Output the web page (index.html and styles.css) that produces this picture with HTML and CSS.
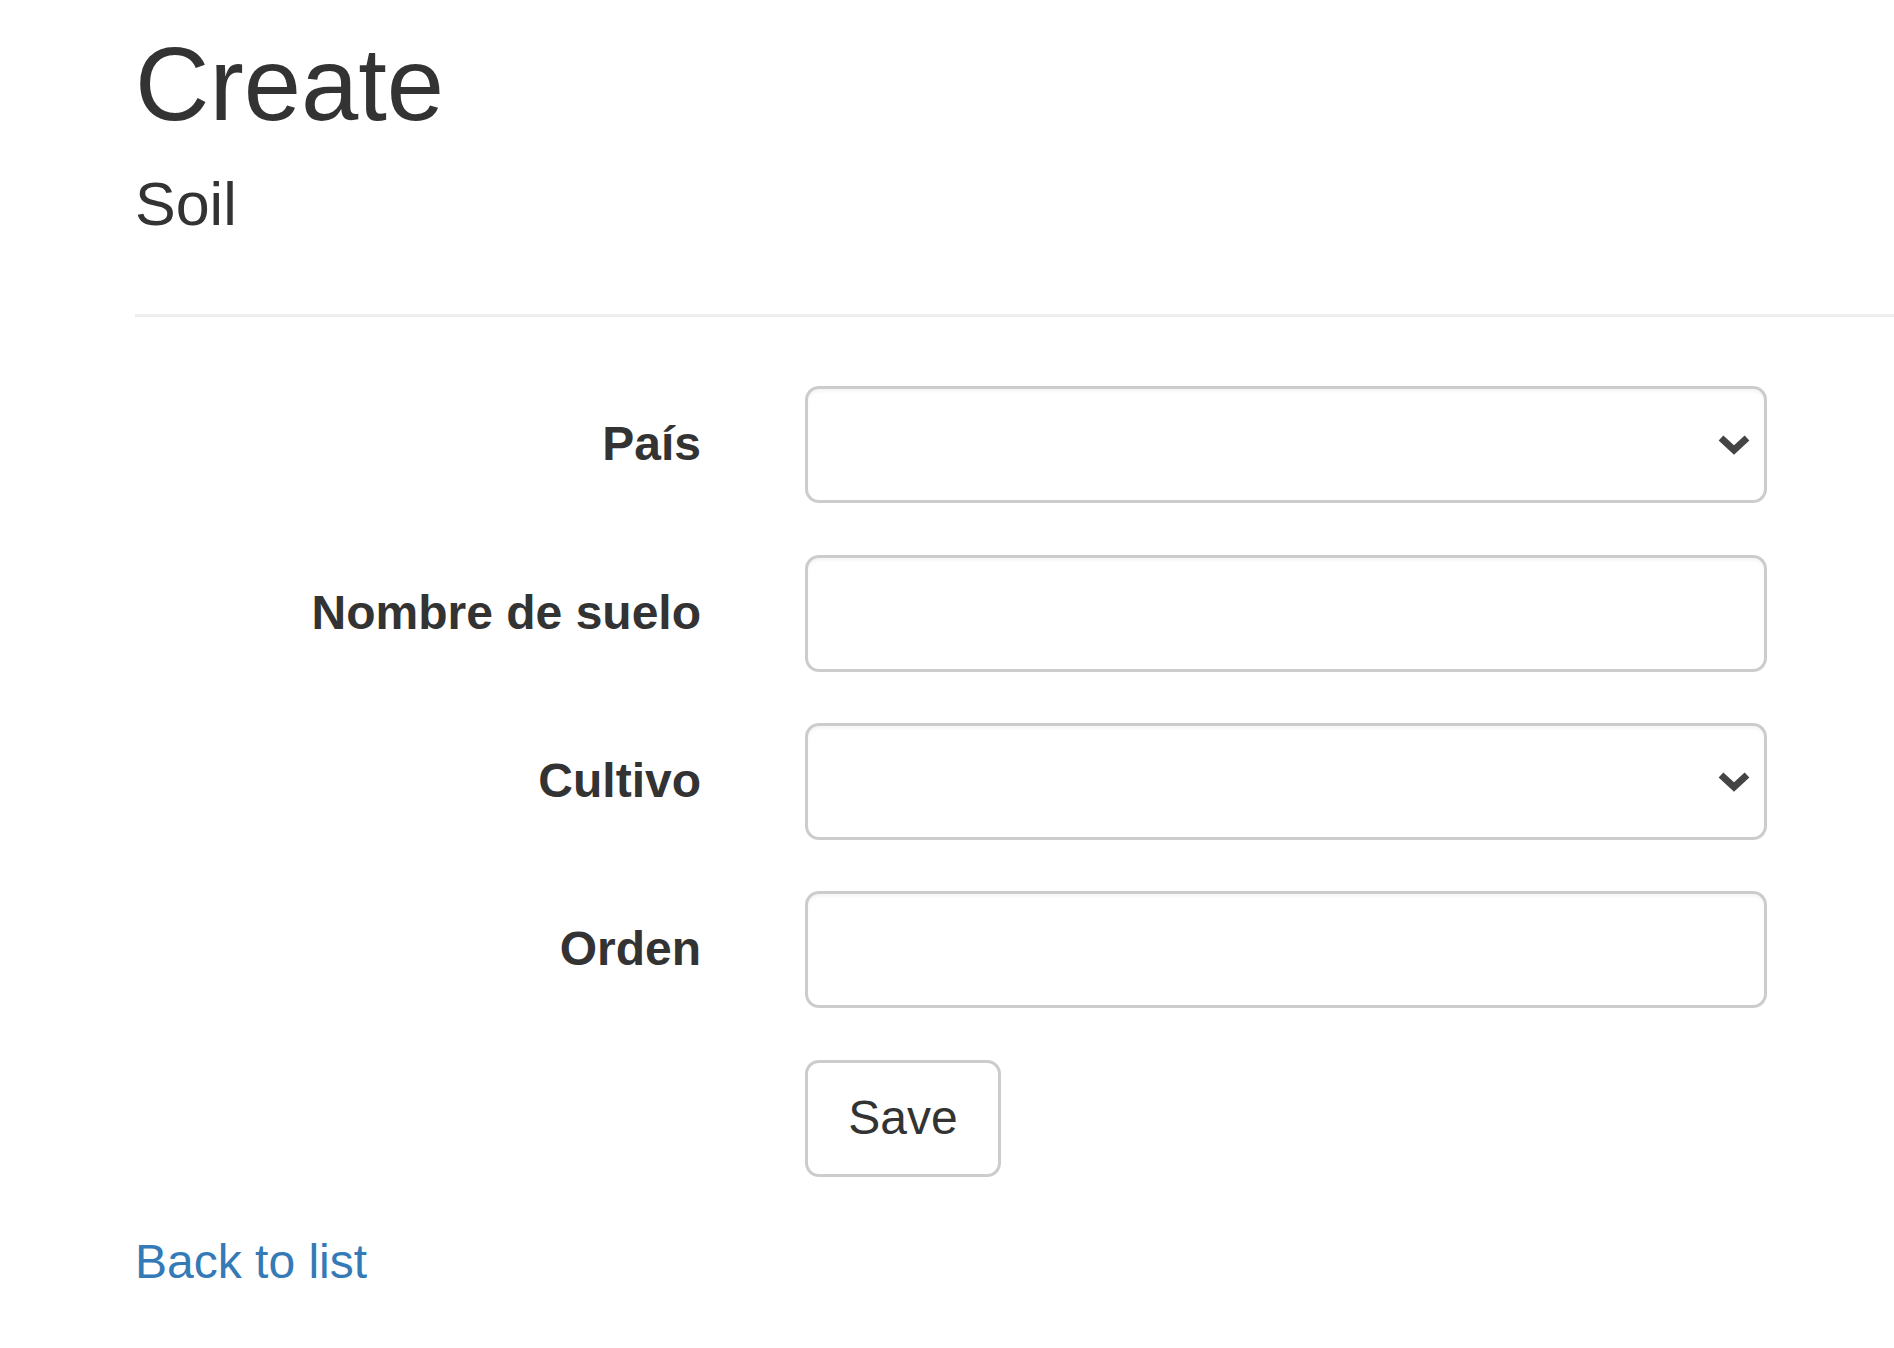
FILE: index.html
```html
<!DOCTYPE html>
<html lang="es">
<head>
<meta charset="utf-8">
<title>Create - Soil</title>
<link rel="stylesheet" href="styles.css">
</head>
<body>
<div class="container">
  <h2 class="page-title">Create</h2>
  <form class="form-horizontal">
    <h4 class="subtitle">Soil</h4>
    <hr class="divider">
    <div class="form-group">
      <label class="control-label">País</label>
      <div class="field">
        <div class="select-wrap">
          <div class="form-control"></div>
          <svg class="chevron" width="34" height="22" viewBox="0 0 34 22"><polyline points="4,5 17,17 30,5" fill="none" stroke="#444" stroke-width="7" stroke-linejoin="miter"/></svg>
        </div>
      </div>
    </div>
    <div class="form-group">
      <label class="control-label">Nombre de suelo</label>
      <div class="field">
        <div class="form-control"></div>
      </div>
    </div>
    <div class="form-group">
      <label class="control-label">Cultivo</label>
      <div class="field">
        <div class="select-wrap">
          <div class="form-control"></div>
          <svg class="chevron" width="34" height="22" viewBox="0 0 34 22"><polyline points="4,5 17,17 30,5" fill="none" stroke="#444" stroke-width="7" stroke-linejoin="miter"/></svg>
        </div>
      </div>
    </div>
    <div class="form-group">
      <label class="control-label">Orden</label>
      <div class="field">
        <div class="form-control"></div>
      </div>
    </div>
    <div class="form-group">
      <span class="control-label"></span>
      <div class="field">
        <button type="button" class="btn">Save</button>
      </div>
    </div>
  </form>
  <div class="back">
    <a href="#" class="back-link">Back to list</a>
  </div>
</div>
</body>
</html>
```

FILE: styles.css
```css
html, body {
  margin: 0;
  padding: 0;
  background: #fff;
}
body {
  font-family: "Liberation Sans", Arial, Helvetica, sans-serif;
  font-size: 48px;
  line-height: 68.6px;
  color: #333;
  overflow: hidden;
}
.container {
  padding-left: 135px;
}
.page-title {
  margin: 28px 0 0;
  font-size: 103px;
  font-weight: 400;
  line-height: 113.3px;
}
.form-horizontal {
  margin: 0;
}
.subtitle {
  margin: 30px 0 0;
  font-size: 61px;
  font-weight: 400;
  line-height: 67.9px;
}
.divider {
  margin: 74.5px 0 69.6px;
  border: 0;
  border-top: 3.4px solid #eeeeee;
  height: 0;
}
.form-group {
  display: grid;
  grid-template-columns: 566px 962px;
  column-gap: 104px;
  margin-bottom: 51.4px;
}
.control-label {
  text-align: right;
  font-weight: 700;
  padding-top: 24px;
}
.field {
  display: flex;
}
.select-wrap {
  position: relative;
  width: 962px;
}
.form-control {
  box-sizing: border-box;
  width: 962px;
  height: 117px;
  border: 3.4px solid #cccccc;
  border-radius: 14px;
  background: #fff;
  box-shadow: inset 0 3px 3px rgba(0, 0, 0, 0.04);
}
.chevron {
  position: absolute;
  right: 16px;
  top: 47px;
}
.btn {
  box-sizing: border-box;
  height: 117px;
  width: 196px;
  padding: 0;
  border: 3.4px solid #cccccc;
  border-radius: 14px;
  background: #fff;
  color: #333;
  font-family: "Liberation Sans", Arial, Helvetica, sans-serif;
  font-size: 48px;
  line-height: 68.6px;
}
.back {
  margin: 0;
}
.back-link {
  color: #337ab7;
  text-decoration: none;
}
```
